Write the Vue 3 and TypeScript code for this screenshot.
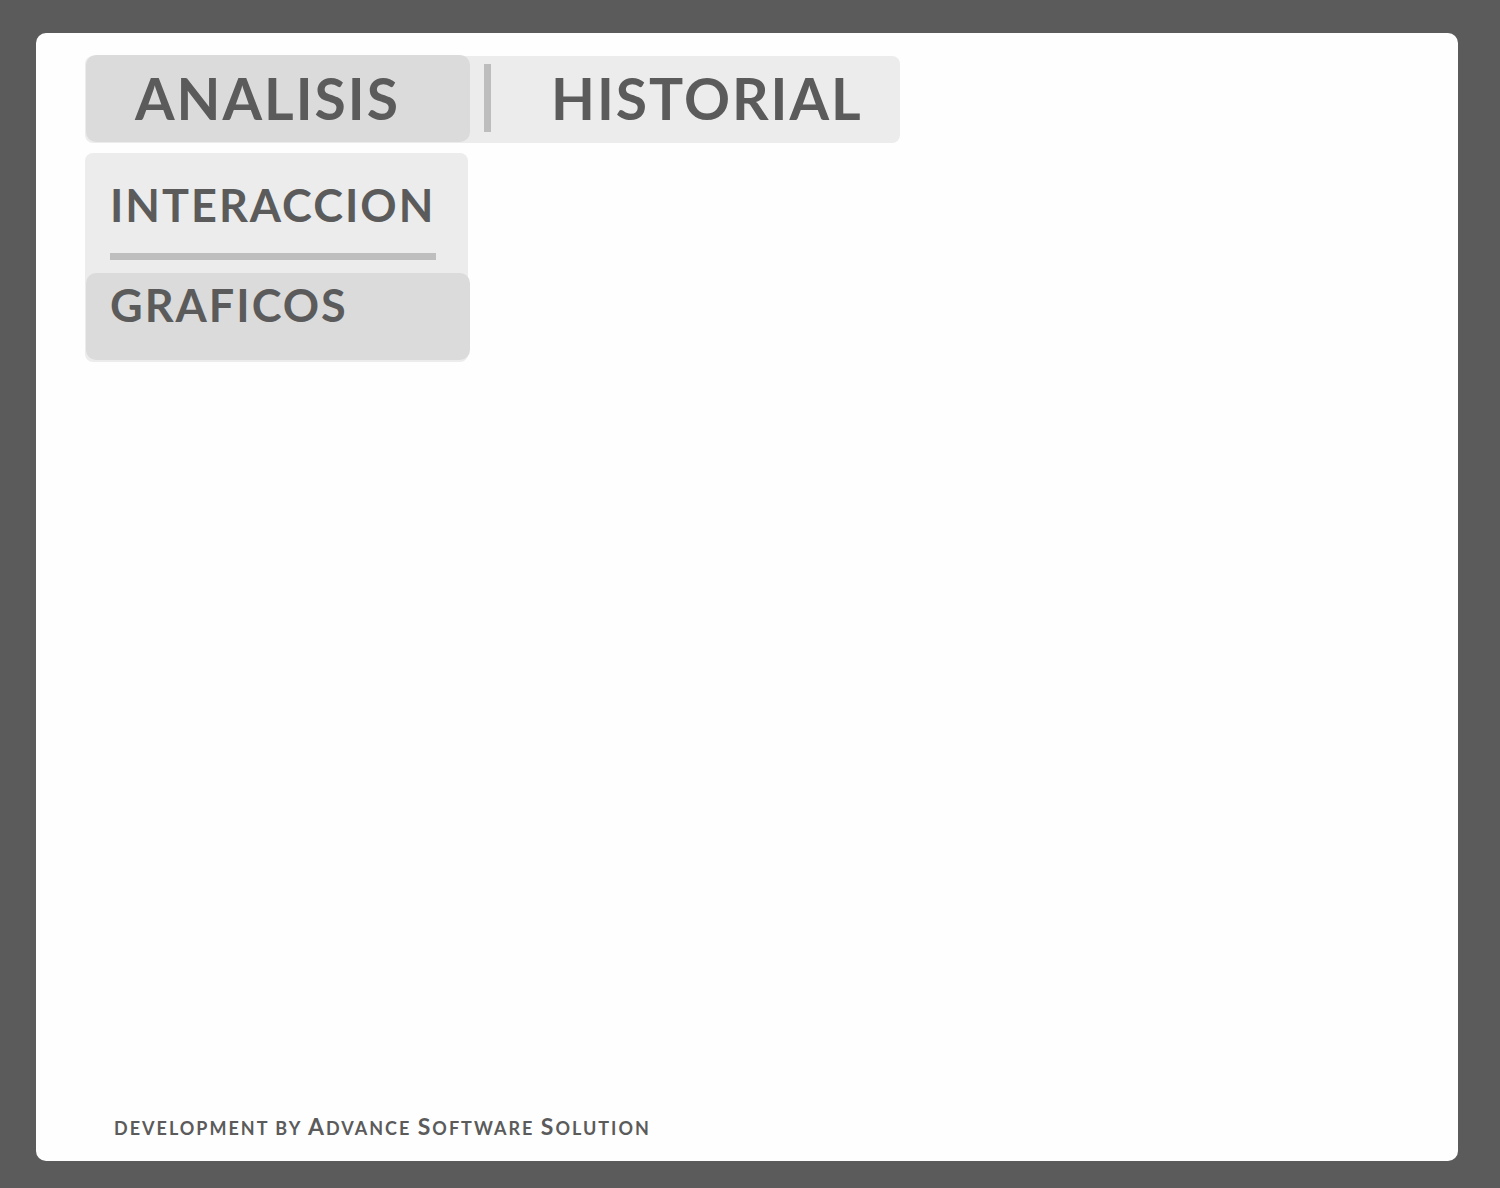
<script setup lang="ts">
import { ref } from 'vue'

const tab = ref('ANALISIS')
const item = ref('GRAFICOS')
</script>

<template>
  <div class="frame">
    <div class="sheet">
      <nav class="tabs">
        <button class="tab" :class="{ active: tab === 'ANALISIS' }" @click="tab = 'ANALISIS'">ANALISIS</button>
        <span class="divider"></span>
        <button class="tab second" :class="{ active: tab === 'HISTORIAL' }" @click="tab = 'HISTORIAL'">HISTORIAL</button>
      </nav>
      <nav class="menu">
        <button class="item" :class="{ active: item === 'INTERACCION' }" @click="item = 'INTERACCION'">INTERACCION</button>
        <span class="rule"></span>
        <button class="item last" :class="{ active: item === 'GRAFICOS' }" @click="item = 'GRAFICOS'">GRAFICOS</button>
      </nav>
      <footer class="credit">development by <span class="name">Advance</span> <span class="name">Software</span> <span class="name">Solution</span></footer>
    </div>
  </div>
</template>

<style>
body {
  margin: 0;
  background: #5b5b5b;
}
</style>

<style scoped>
.frame {
  box-sizing: border-box;
  display: flex;
  min-height: 100vh;
  padding: 33px 42px 27px 36px;
  background: #5b5b5b;
  color: #5b5b5b;
  font-family: Lato, "Open Sans", sans-serif;
  font-weight: 700;
}
.sheet {
  box-sizing: border-box;
  flex: 1;
  display: flex;
  flex-direction: column;
  align-items: flex-start;
  padding: 23px 49px 18px;
  background: #fefefe;
  border-radius: 10px;
}
button {
  box-sizing: border-box;
  margin: 0;
  padding: 0;
  border: 0;
  border-radius: 10px;
  background: transparent;
  color: inherit;
  font: inherit;
  text-align: left;
  cursor: pointer;
}
.tabs {
  display: flex;
  align-items: center;
  gap: 14px;
  height: 87px;
  padding-left: 1px;
  background: #ececec;
  border-radius: 8px;
}
.tab {
  width: 384px;
  height: 87px;
  margin-top: -2px;
  padding: 0 0 1px 49px;
  font-size: 57px;
  line-height: 86px;
  letter-spacing: 2px;
}
.tab.second {
  width: 395px;
  padding-left: 46px;
}
.active {
  background: #dbdbdb;
}
.divider {
  width: 7px;
  height: 68px;
  margin-bottom: 3px;
  background: #bdbdbd;
}
.menu {
  box-sizing: border-box;
  display: flex;
  flex-direction: column;
  width: 383px;
  margin-top: 10px;
  padding: 0 0 2px 1px;
  background: #ececec;
  border-radius: 8px;
}
.item {
  height: 100px;
  padding: 4px 0 0 24px;
  font-size: 45px;
  line-height: 96px;
  letter-spacing: 2px;
}
.rule {
  height: 7px;
  margin: 0 32px 13px 24px;
  background: #bdbebd;
}
.item.last {
  width: 384px;
  height: 87px;
  padding: 0 0 23px 24px;
  line-height: 64px;
}
.credit {
  margin-top: auto;
  padding-left: 29px;
  font-size: 18px;
  line-height: 30px;
  letter-spacing: 2px;
  text-transform: uppercase;
}
.name {
  display: inline-block;
}
.name::first-letter {
  font-size: 23px;
}
</style>
